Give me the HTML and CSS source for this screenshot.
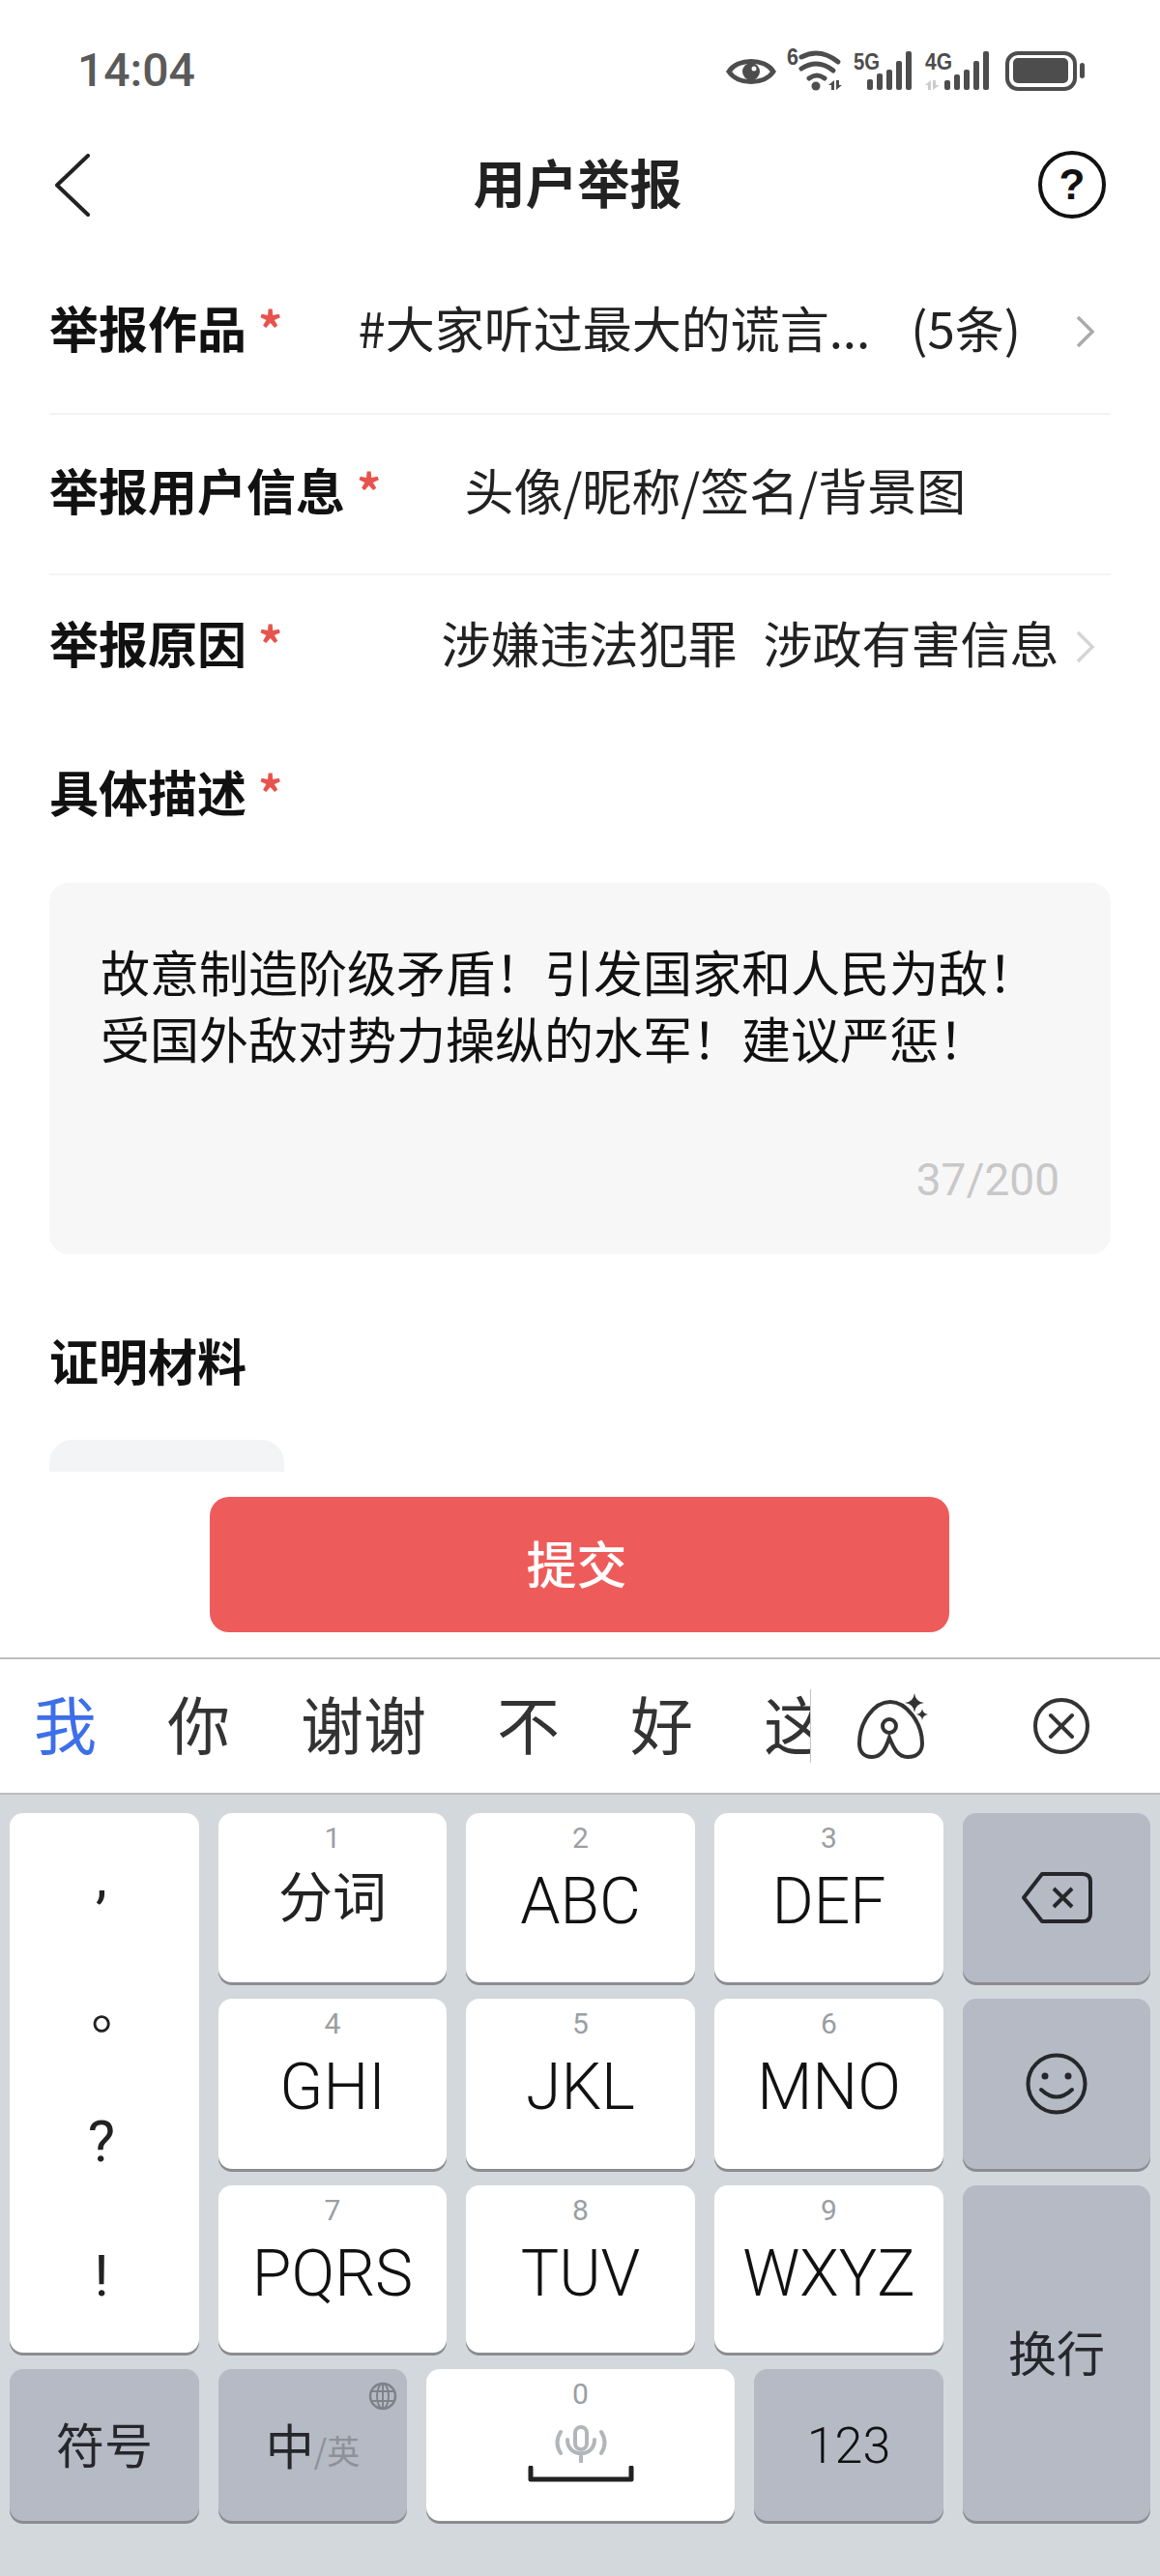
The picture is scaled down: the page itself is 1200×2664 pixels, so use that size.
FILE: index.html
```html
<!DOCTYPE html>
<html lang="zh-CN">
<head>
    <meta charset="UTF-8">
    <meta name="viewport" content="width=device-width, initial-scale=1.0">
    <title>用户举报</title>
    <link rel="stylesheet" href="styles.css">
</head>
<body>
    <div class="status-bar">
        <span class="status-time">14:04</span>
        <svg class="status-icons" width="400" height="70" viewBox="730 30 400 70">
            <!-- eye -->
            <path d="M754 74C763 60 791 60 800 74C791 88 763 88 754 74Z" fill="none" stroke="#4d4d4d" stroke-width="5"/>
            <circle cx="777" cy="74" r="9" fill="#4d4d4d"/>
            <circle cx="780" cy="71" r="2.5" fill="#fff"/>
            <!-- wifi -->
            <text x="814" y="67" class="status-num" textLength="12" lengthAdjust="spacingAndGlyphs">6</text>
            <path d="M829 59Q848 49 867 64" fill="none" stroke="#4d4d4d" stroke-width="5" stroke-linecap="round"/>
            <path d="M829 71Q846 60 862 73" fill="none" stroke="#4d4d4d" stroke-width="5" stroke-linecap="round"/>
            <path d="M837 81Q845 75 853 81" fill="none" stroke="#4d4d4d" stroke-width="5" stroke-linecap="round"/>
            <circle cx="844" cy="89" r="4.5" fill="#4d4d4d"/>
            <path d="M863 83V93H860V88H857ZM865 83H868V88H871L865 93Z" fill="#4d4d4d"/>
            <!-- 5G -->
            <text x="883" y="72" class="status-num" textLength="27" lengthAdjust="spacingAndGlyphs">5G</text>
            <rect x="897" y="82" width="6" height="11" rx="2" fill="#4d4d4d"/>
            <rect x="907" y="76" width="6" height="17" rx="2" fill="#4d4d4d"/>
            <rect x="917" y="72" width="6" height="21" rx="2" fill="#4d4d4d"/>
            <rect x="927" y="63" width="6" height="30" rx="2" fill="#4d4d4d"/>
            <rect x="937" y="53" width="6" height="40" rx="2" fill="#4d4d4d"/>
            <!-- 4G -->
            <text x="957" y="72" class="status-num" textLength="28" lengthAdjust="spacingAndGlyphs">4G</text>
            <path d="M963 83V93H960V88H957ZM965 83H968V88H972L965 93Z" fill="#ccc"/>
            <rect x="977" y="83" width="6" height="10" rx="2" fill="#4d4d4d"/>
            <rect x="987" y="77" width="6" height="16" rx="2" fill="#4d4d4d"/>
            <rect x="997" y="72" width="6" height="21" rx="2" fill="#4d4d4d"/>
            <rect x="1007" y="63" width="6" height="30" rx="2" fill="#4d4d4d"/>
            <rect x="1017" y="53" width="6" height="40" rx="2" fill="#4d4d4d"/>
            <!-- battery -->
            <rect x="1042" y="55" width="70" height="37" rx="11" fill="none" stroke="#4d4d4d" stroke-width="4"/>
            <rect x="1048" y="60" width="57" height="26" rx="5" fill="#4d4d4d"/>
            <rect x="1117" y="65" width="5" height="16" rx="2.5" fill="#4d4d4d"/>
        </svg>
    </div>

    <main class="content">
        <header class="nav">
            <svg width="37" height="65" viewBox="0 0 37 65">
                <path d="M35 2L3 32.500L35 63" fill="none" stroke="#222" stroke-width="4" stroke-linecap="round" stroke-linejoin="round"/>
            </svg>
            <h1 class="nav-title">用户举报</h1>
            <svg width="70" height="70" viewBox="0 0 70 70">
                <circle cx="35" cy="35" r="33" fill="none" stroke="#111" stroke-width="4"/>
                <text x="35" y="50" class="help-mark">?</text>
            </svg>
        </header>

        <div class="form-row row-work">
            <span class="label">举报作品</span><span class="star">*</span>
            <span class="value value-work">#大家听过最大的谎言...<span class="count">(5条)</span></span>
            <svg class="chevron" width="19" height="34" viewBox="0 0 19 34">
                <path d="M2 2L17 17L2 32" fill="none" stroke="#aaa" stroke-width="3.500"/>
            </svg>
        </div>
        <div class="form-row row-user">
            <span class="label">举报用户信息</span><span class="star">*</span>
            <span class="value value-user">头像/昵称/签名/背景图</span>
        </div>
        <div class="form-row row-reason">
            <span class="label">举报原因</span><span class="star">*</span>
            <span class="value value-reason">涉嫌违法犯罪<span class="reason-second">涉政有害信息</span></span>
            <svg class="chevron" width="19" height="34" viewBox="0 0 19 34">
                <path d="M2 2L17 17L2 32" fill="none" stroke="#d4d4d4" stroke-width="3.500"/>
            </svg>
        </div>

        <div class="section-title desc-title"><span class="label">具体描述</span><span class="star">*</span></div>
        <div class="desc-box">
            <p class="desc-text">故意制造阶级矛盾！引发国家和人民为敌！<br>受国外敌对势力操纵的水军！建议严惩！</p>
            <span class="desc-count">37/200</span>
        </div>

        <div class="section-title proof-title"><span class="label">证明材料</span></div>
        <div class="proof-box"></div>
    </main>

    <div class="submit-bar">
        <button class="submit-btn">提交</button>
    </div>

    <div class="candidates">
        <div class="candidate-list">
            <span class="candidate active">我</span>
            <span class="candidate">你</span>
            <span class="candidate">谢谢</span>
            <span class="candidate">不</span>
            <span class="candidate">好</span>
            <span class="candidate candidate-cut">这</span>
        </div>
        <svg class="ai-icon" width="80" height="72" viewBox="885 1748 80 72">
            <circle cx="921" cy="1784" r="7" fill="none" stroke="#333" stroke-width="4"/>
            <path d="M921 1796C917 1808 913 1816 903 1816C894 1816 890 1810 890 1802C890 1780 905 1759 922 1759C938 1759 955 1780 955 1802C955 1810 950 1816 940 1816C930 1816 926 1808 921 1796Z" fill="none" stroke="#333" stroke-width="4"/>
            <path d="M947 1750Q948 1759 957 1760Q948 1761 947 1770Q946 1761 937 1760Q946 1759 947 1750Z" fill="#333"/>
            <path d="M955 1766Q955.500 1771 961 1772Q955.500 1773 955 1778Q954.500 1773 949 1772Q954.500 1771 955 1766Z" fill="#333"/>
        </svg>
        <svg class="close-icon" width="58" height="58" viewBox="0 0 58 58">
            <circle cx="29" cy="29" r="27" fill="none" stroke="#333" stroke-width="4"/>
            <path d="M18 18L40 40M40 18L18 40" fill="none" stroke="#333" stroke-width="4" stroke-linecap="round"/>
        </svg>
    </div>

    <div class="keyboard">
        <div class="key key-punct">
            <span>,</span>
            <span class="punct-full">。</span>
            <span>?</span>
            <span>!</span>
        </div>
        <div class="key key-a"><span class="digit">1</span><span class="letters letters-cjk">分词</span></div>
        <div class="key key-b"><span class="digit">2</span><span class="letters">ABC</span></div>
        <div class="key key-c"><span class="digit">3</span><span class="letters">DEF</span></div>
        <div class="key key-func key-side">
            <svg width="74" height="53" viewBox="0 0 74 53">
                <path d="M22 2H64Q72 2 72 10V43Q72 51 64 51H22L3 26.500Z" fill="none" stroke="#25272b" stroke-width="4" stroke-linejoin="round"/>
                <path d="M34 17L53 36M53 17L34 36" fill="none" stroke="#25272b" stroke-width="4"/>
            </svg>
        </div>

        <div class="key key-a"><span class="digit">4</span><span class="letters">GHI</span></div>
        <div class="key key-b"><span class="digit">5</span><span class="letters">JKL</span></div>
        <div class="key key-c"><span class="digit">6</span><span class="letters">MNO</span></div>
        <div class="key key-func key-side">
            <svg width="64" height="64" viewBox="0 0 64 64">
                <circle cx="32" cy="32" r="29.500" fill="none" stroke="#25272b" stroke-width="4"/>
                <circle cx="20" cy="24" r="3.500" fill="#25272b"/>
                <circle cx="44" cy="24" r="3.500" fill="#25272b"/>
                <path d="M16 38Q32 53 48 38" fill="none" stroke="#25272b" stroke-width="4" stroke-linecap="round"/>
            </svg>
        </div>

        <div class="key key-a"><span class="digit">7</span><span class="letters">PQRS</span></div>
        <div class="key key-b"><span class="digit">8</span><span class="letters">TUV</span></div>
        <div class="key key-c"><span class="digit">9</span><span class="letters">WXYZ</span></div>
        <div class="key key-func key-enter"><span class="func-text">换行</span></div>

        <div class="key key-func key-symbol"><span class="func-text">符号</span></div>
        <div class="key key-func key-lang">
            <svg class="globe" width="30" height="30" viewBox="0 0 30 30">
                <circle cx="15" cy="15" r="13" fill="none" stroke="#7e828a" stroke-width="2.500"/>
                <ellipse cx="15" cy="15" rx="6" ry="13" fill="none" stroke="#7e828a" stroke-width="2"/>
                <path d="M15 2V28M3 10H27M3 20H27" fill="none" stroke="#7e828a" stroke-width="2"/>
            </svg>
            <span class="func-text lang-main">中</span><span class="lang-alt">/英</span>
        </div>
        <div class="key key-space">
            <span class="digit">0</span>
            <svg class="mic" width="60" height="40" viewBox="0 0 60 40">
                <rect x="24" y="3" width="12" height="23" rx="6" fill="none" stroke="#b2b6bb" stroke-width="4"/>
                <path d="M16 16C16 35 44 35 44 16M30 31V39" fill="none" stroke="#b2b6bb" stroke-width="4" stroke-linecap="round"/>
                <path d="M9 8Q2 19 9 30M51 8Q58 19 51 30" fill="none" stroke="#b2b6bb" stroke-width="4" stroke-linecap="round"/>
            </svg>
            <svg class="space-bar" width="110" height="18" viewBox="0 0 110 18">
                <path d="M3 2V14H107V2" fill="none" stroke="#222" stroke-width="5" stroke-linecap="round" stroke-linejoin="round"/>
            </svg>
        </div>
        <div class="key key-func key-num"><span class="num-text">123</span></div>
    </div>
</body>
</html>
```
FILE: styles.css
```css
/* General Styling */
* {
    box-sizing: border-box;
}

body {
    margin: 0;
    width: 1200px;
    height: 2664px;
    overflow: hidden;
    background: #fff;
    color: #222;
    font-family: "Noto Sans CJK SC", "Noto Sans", sans-serif;
}

/* Status Bar */
.status-bar {
    height: 130px;
    padding-left: 80px;
    padding-top: 43px;
    display: flex;
    justify-content: space-between;
    align-items: flex-start;
}

.status-time {
    font-family: Roboto, sans-serif;
    font-size: 48px;
    font-weight: 500;
    line-height: 60px;
    color: #5a5a5a;
}

.status-icons {
    margin-top: -13px;
    margin-right: 70px;
}

.status-num {
    font-family: "Liberation Sans", sans-serif;
    font-size: 24px;
    font-weight: bold;
    fill: #4d4d4d;
}

/* Content */
.content {
    height: 1392px;
    overflow: hidden;
    padding: 0 51px;
}

.nav {
    height: 122px;
    padding: 0 5px 0 5px;
    display: flex;
    justify-content: space-between;
    align-items: center;
}

.nav-title {
    margin: 0 0 6px 28px;
    font-size: 54px;
    font-weight: 700;
    line-height: 70px;
    color: #222;
}

.help-mark {
    font-family: "Liberation Sans", sans-serif;
    font-size: 44px;
    font-weight: bold;
    fill: #111;
    text-anchor: middle;
}

/* Form Rows */
.form-row {
    display: flex;
    align-items: center;
    padding-right: 17px;
}

.row-work {
    padding-top: 56px;
    padding-bottom: 59px;
    border-bottom: 2px solid #f3f3f3;
}

.row-user {
    padding-top: 47px;
    padding-bottom: 57px;
    border-bottom: 2px solid #f3f3f3;
}

.row-reason {
    padding-top: 39px;
}

.label {
    font-size: 51px;
    font-weight: 700;
    line-height: 60px;
    color: #111;
}

.star {
    margin-left: 12px;
    font-size: 50px;
    font-weight: 700;
    line-height: 60px;
    color: #e8534d;
}

.value {
    font-size: 51px;
    line-height: 60px;
    white-space: nowrap;
    color: #222;
}

.value-work {
    margin-left: 78px;
}

.value-user {
    margin-left: 86px;
}

.value-reason {
    margin-left: 164px;
}

.count {
    margin-left: 42px;
}

.reason-second {
    margin-left: 27px;
}

.chevron {
    margin-left: auto;
    margin-top: 10px;
}

/* Description */
.section-title {
    display: flex;
    align-items: center;
}

.desc-title {
    margin-top: 94px;
}

.desc-box {
    margin-top: 65px;
    height: 384px;
    padding: 57px 53px 52px 53px;
    border-radius: 20px;
    background: #f7f7f8;
    display: flex;
    flex-direction: column;
    justify-content: space-between;
}

.desc-text {
    margin: 0;
    font-size: 51px;
    line-height: 69px;
    color: #111;
    white-space: nowrap;
}

.desc-count {
    align-self: flex-end;
    font-family: Roboto, sans-serif;
    font-size: 46px;
    line-height: 50px;
    color: #c8c8c8;
}

.proof-title {
    margin-top: 79px;
}

.proof-box {
    margin-top: 53px;
    width: 243px;
    height: 243px;
    border-radius: 24px;
    background: #f3f4f6;
}

/* Submit */
.submit-bar {
    height: 192px;
    padding-top: 26px;
    display: flex;
    justify-content: center;
}

.submit-btn {
    width: 765px;
    height: 140px;
    margin-left: -1px;
    padding: 0 6px 6px 0;
    border: none;
    border-radius: 20px;
    background: #ed5c5a;
    color: #fff;
    font-family: inherit;
    font-size: 52px;
    font-weight: 500;
}

/* Candidate Bar */
.candidates {
    height: 142px;
    border-top: 2px solid #bdbdbd;
    border-bottom: 2px solid #bdbdbd;
    display: flex;
    align-items: center;
}

.candidate-list {
    width: 839px;
    height: 76px;
    padding-left: 35px;
    border-right: 1px solid #c4c4c4;
    display: flex;
    gap: 73px;
    white-space: nowrap;
    flex-shrink: 0;
}

.candidate {
    flex-shrink: 0;
    font-size: 65px;
    line-height: 68px;
    color: #333;
}

.candidate.active {
    color: #3d6fe8;
}

.candidate-cut {
    width: 48px;
    height: 76px;
    overflow: hidden;
}

.ai-icon {
    margin-left: 45px;
}

.close-icon {
    margin-left: 105px;
}

/* Keyboard */
.keyboard {
    height: 808px;
    padding: 19px 10px 0;
    background: #d3d8dc;
    display: grid;
    grid-template-columns: 196px 195px 21px 237px 21px 196px 194px;
    grid-template-rows: 175px 176px 173px 157px;
    column-gap: 20px;
    row-gap: 17px;
}

.key {
    position: relative;
    border-radius: 14px;
    background: #fff;
    box-shadow: 0 3px 0 #8a8c90;
    display: flex;
    flex-direction: column;
    align-items: center;
    color: #222;
}

.key-a {
    grid-column: 2 / 4;
}

.key-b {
    grid-column: 4;
}

.key-c {
    grid-column: 5 / 7;
}

.key-func {
    background: #b5bac4;
    justify-content: center;
}

.key-side {
    grid-column: 7;
}

.key-punct {
    grid-column: 1;
    grid-row: 1 / 4;
    padding: 36px 6px 0 0;
    font-family: Roboto, sans-serif;
    font-size: 60px;
    line-height: 60px;
}

.key-punct span:nth-child(2) {
    margin-top: 89px;
}

.key-punct span:nth-child(3) {
    margin-top: 65px;
}

.key-punct span:nth-child(4) {
    margin-top: 79px;
}

.punct-full {
    font-family: "Noto Sans CJK TC", sans-serif;
    font-size: 56px;
}

.digit {
    margin-top: 6px;
    font-family: Roboto, sans-serif;
    font-size: 30px;
    line-height: 40px;
    color: #9b9ea3;
}

.letters {
    margin-top: 14px;
    font-family: Roboto, sans-serif;
    font-size: 66px;
    font-weight: 300;
    line-height: 64px;
    color: #111;
}

.letters-cjk {
    margin-top: 5px;
    font-family: "Noto Sans CJK SC", sans-serif;
    font-size: 56px;
    font-weight: 400;
    color: #222;
}

.func-text {
    margin-top: -6px;
    font-size: 50px;
    line-height: 60px;
    color: #25272b;
}

.key-enter {
    grid-column: 7;
    grid-row: 3 / 5;
}

.key-symbol {
    grid-column: 1;
}

.key-lang {
    grid-column: 2;
    flex-direction: row;
    align-items: flex-end;
    padding-bottom: 50px;
}

.lang-main {
    margin-top: 0;
}

.globe {
    position: absolute;
    top: 13px;
    right: 10px;
}

.lang-alt {
    font-size: 34px;
    line-height: 46px;
    color: #8e9198;
}

.key-space {
    grid-column: 3 / 6;
}

.mic {
    margin-top: 11px;
}

.space-bar {
    margin-top: 3px;
}

.key-num {
    grid-column: 6;
}

.num-text {
    margin-top: 2px;
    font-family: Roboto, sans-serif;
    font-size: 52px;
    font-weight: 300;
    line-height: 60px;
    color: #111;
}
```
